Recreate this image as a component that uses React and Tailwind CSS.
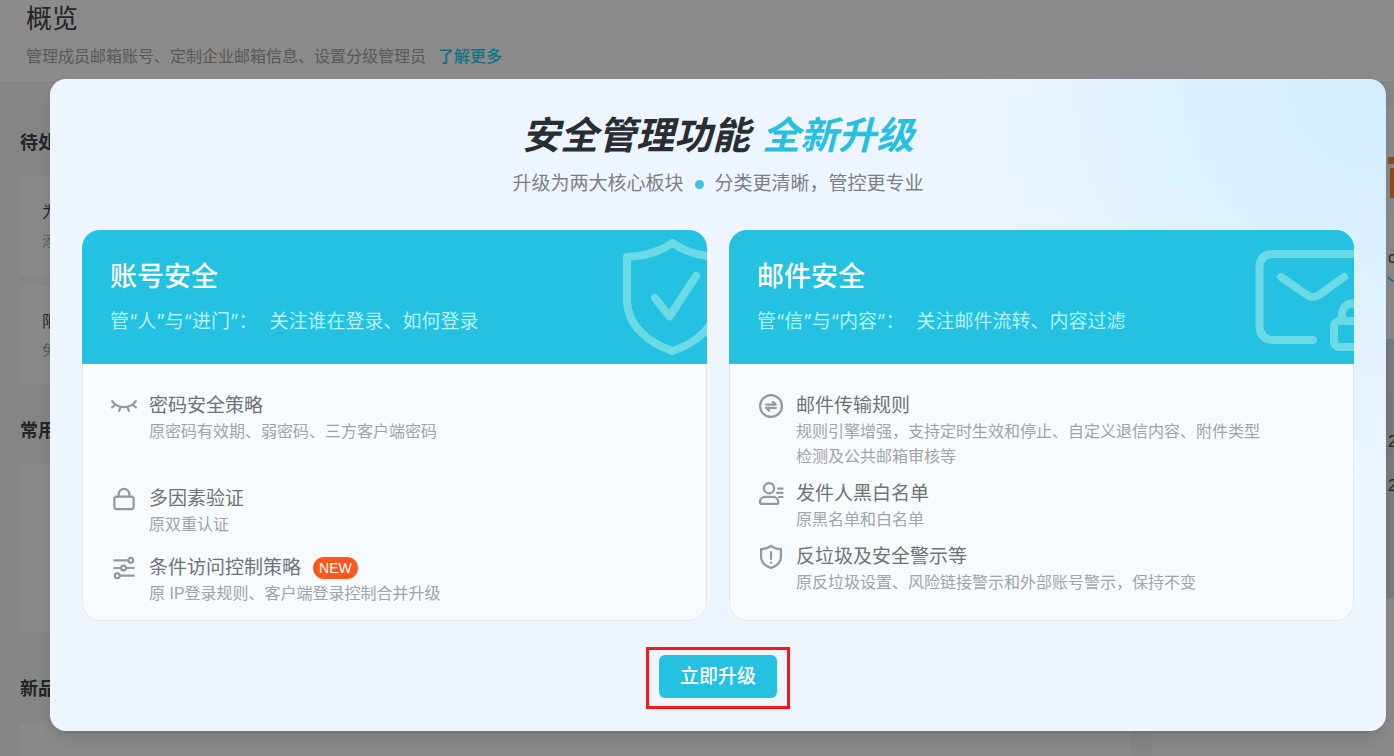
import React from "react";

const accountItems = [
  {
    icon: "eye",
    title: "密码安全策略",
    desc: "原密码有效期、弱密码、三方客户端密码",
    spacing: "mb-[42px]",
  },
  { icon: "lock", title: "多因素验证", desc: "原双重认证", spacing: "mb-[18px]" },
  {
    icon: "sliders",
    title: "条件访问控制策略",
    desc: "原 IP登录规则、客户端登录控制合并升级",
    isNew: true,
    spacing: "",
  },
];

const mailItems = [
  {
    icon: "transfer",
    title: "邮件传输规则",
    desc: "规则引擎增强，支持定时生效和停止、自定义退信内容、附件类型检测及公共邮箱审核等",
    spacing: "mb-3",
  },
  { icon: "user", title: "发件人黑白名单", desc: "原黑名单和白名单", spacing: "mb-3" },
  {
    icon: "shield",
    title: "反垃圾及安全警示等",
    desc: "原反垃圾设置、风险链接警示和外部账号警示，保持不变",
    spacing: "",
  },
];

const iconPaths = {
  eye: (
    <path d="M1.200 8.500c6 8.300 18.400 8.300 24.600 0M4.500 12l-3.300 3M10 14.600l-1.600 4M17 14.600l1.600 4M22.500 12l3.300 3" />
  ),
  lock: (
    <>
      <rect x="3.500" y="11" width="20" height="13" rx="2.500" />
      <path d="M8 11V8.500a5.500 5.500 0 0 1 11 0v2.500" />
    </>
  ),
  sliders: (
    <>
      <path d="M3.500 5.500h14M3.500 13.500h7M15.500 13.500H23.500M9.500 21.500h14" />
      <circle cx="20.500" cy="5.500" r="2.500" />
      <circle cx="13" cy="13.500" r="2.500" />
      <circle cx="6.500" cy="21.500" r="2.500" />
    </>
  ),
  transfer: (
    <>
      <circle cx="13.500" cy="13.500" r="11.300" />
      <path d="M8.500 12h10l-3.200-2.800M18.500 15.500h-10l3.200 2.800" />
    </>
  ),
  user: (
    <>
      <circle cx="11.500" cy="7.500" r="5.300" />
      <path d="M2 22c0-3.500 2.500-5.500 5.500-5.500h8c3 0 5.500 2 5.500 5.500 0 1-.6 1.800-1.500 1.800h-16C2.600 23.800 2 23 2 22z" />
      <path d="M21 8h4.500M19.500 12.300h6M22 16.600h3.500" />
    </>
  ),
  shield: (
    <>
      <path d="M13.500 2c2.500 2 6 3.300 10.300 3.300V13c0 5.700-4.200 9.900-10.300 12C7.400 22.900 3.200 18.700 3.200 13V5.300C7.500 5.300 11 4 13.500 2z" />
      <path d="M13.500 8.500v7M13.500 19.200v.4" />
    </>
  ),
};

function ItemIcon({ name }) {
  return (
    <svg
      viewBox="0 0 27 27"
      className="w-[26px] h-[26px] shrink-0"
      fill="none"
      stroke="#95989c"
      strokeWidth="2.300"
      strokeLinecap="round"
      strokeLinejoin="round"
      aria-hidden="true"
    >
      {iconPaths[name]}
    </svg>
  );
}

function ShieldMark() {
  return (
    <svg
      viewBox="0 0 120 134"
      className="absolute right-0 top-0 w-[120px] h-[134px]"
      fill="none"
      stroke="#6bdae7"
      strokeWidth="8"
      strokeLinecap="round"
      strokeLinejoin="round"
      aria-hidden="true"
    >
      <path d="M85.500 13Q67 26 40 27V70C40 96 62 113 85.500 121C109 113 131 96 131 70V27Q104 26 85.500 13z" />
      <path d="M68 68L82.500 86.500L109 46" />
    </svg>
  );
}

function MailMark() {
  return (
    <svg
      viewBox="0 0 120 134"
      className="absolute right-0 top-0 w-[120px] h-[134px]"
      fill="none"
      stroke="#6bdae7"
      strokeWidth="8"
      strokeLinecap="round"
      strokeLinejoin="round"
      aria-hidden="true"
    >
      <path d="M134 24H40Q25.500 24 25.500 38V95Q25.500 110 40 110H79" />
      <path d="M47 47L73 65Q79 69 85 65L110 47" />
      <rect x="100" y="91" width="37" height="26" rx="5" />
      <path d="M108 91V84a10.500 10.500 0 0 1 21 0V91" />
    </svg>
  );
}

function FeatureCard({ title, topic, focus, mark, items }) {
  return (
    <section className="flex flex-col rounded-[18px] overflow-hidden bg-[#fafcfd]/80">
      <div className="relative overflow-hidden bg-[#24c1e0] px-7 pt-[29px] pb-7">
        {mark}
        <h2 className="text-[27px] leading-9 font-medium text-white">{title}</h2>
        <p className="mt-[13px] flex gap-3 text-[19px] leading-7 text-[#b5f1f8] whitespace-nowrap">
          <span className="font-[Inter,'Noto_Sans_CJK_SC',sans-serif]">{topic}</span>
          <span>{focus}</span>
        </p>
      </div>
      <ul className="flex-1 px-7 pt-[29px] pb-[14px] rounded-b-[18px] border border-t-0 border-[#e1e7ec]">
        {items.map((item) => (
          <li key={item.title} className={`flex gap-3 ${item.spacing}`}>
            <ItemIcon name={item.icon} />
            <div>
              <h3 className="flex items-center gap-3 text-[19px] leading-[26px] text-[#6f7276]">
                {item.title}
                {item.isNew && (
                  <span className="rounded-full bg-[#ff5722] px-[6px] text-sm leading-[22px] text-white">
                    NEW
                  </span>
                )}
              </h3>
              <p className="max-w-[476px] text-base leading-[25px] text-[#a1a4a8]">
                {item.desc}
              </p>
            </div>
          </li>
        ))}
      </ul>
    </section>
  );
}

// Admin overview page that sits under the dialog
function OverviewPage() {
  return (
    <div className="flex flex-col h-full bg-[#f1f5f4] text-[#404447]">
      <header className="bg-[#fdfdfd] pl-[26px] pt-px pb-[13px] border-b border-[#e2e4e6]">
        <h1 className="text-[26px] leading-9">概览</h1>
        <p className="mt-2 text-base leading-6 text-[#a2a2a2]">
          管理成员邮箱账号、定制企业邮箱信息、设置分级管理员
          <a href="#more" className="ml-3 font-medium text-[#1ed2ee]">
            了解更多
          </a>
        </p>
      </header>
      <div className="flex flex-1 min-h-0 gap-[21px] pl-5">
        <main className="flex-1 pt-[46px]">
          <h2 className="text-lg leading-7 font-bold">待处</h2>
          <div className="mt-5 h-[98px] bg-[#fafafa] px-[22px] pt-6">
            <p className="text-base leading-6">为</p>
            <p className="mt-[6px] text-sm leading-5 text-[#a2a2a2]">添</p>
          </div>
          <div className="mt-[11px] h-[98px] bg-[#fafafa] px-[22px] pt-6">
            <p className="text-base leading-6">限</p>
            <p className="mt-[6px] text-sm leading-5 text-[#a2a2a2]">免</p>
          </div>
          <h2 className="mt-[33px] text-lg leading-7 font-bold">常用</h2>
          <div className="mt-5 h-[167px] bg-[#fafafa]"></div>
          <h2 className="mt-[43px] text-lg leading-7 font-bold">新品</h2>
          <div className="mt-5 h-[167px] bg-[#fafafa]"></div>
        </main>
        <aside className="w-[242px] mt-6 bg-[#fafafa] overflow-hidden">
          <div className="h-[232px] pl-[236px] pt-[50px]">
            <div className="h-[7px] bg-[#ff8a35]"></div>
            <div className="mt-1 ml-[2px] h-[30px] bg-[#ff8a35]"></div>
            <p className="mt-[50px] text-base leading-5">c</p>
            <svg viewBox="0 0 8 8" className="w-2 h-2 mt-2" fill="none" stroke="#1ed2ee" strokeWidth="1.500">
              <path d="M0 1Q3 5 8 6" />
            </svg>
          </div>
          <div className="h-[259px] bg-[#dbe1e6] pl-[236px] pt-[91px] text-base leading-6">
            <p>2</p>
            <p className="mt-5">2</p>
          </div>
        </aside>
      </div>
    </div>
  );
}

export default function App() {
  return (
    <div
      lang="zh-CN"
      className="relative h-screen overflow-hidden font-['Liberation_Sans','Noto_Sans_CJK_SC',sans-serif]"
    >
      <OverviewPage />
      <div className="absolute inset-0 overflow-auto bg-black/45 pt-[79px] pl-[50px] pr-2">
        <div
          role="dialog"
          aria-modal="true"
          aria-labelledby="upgrade-title"
          className="flex flex-col rounded-2xl px-8 pt-[33px] pb-[22px] shadow-lg bg-[#eff5fe] bg-[radial-gradient(440px_420px_at_top_right,#d0edfe_0%,#daf0fe_40%,#eff5fe_100%)]"
        >
          <h1
            id="upgrade-title"
            className="flex justify-center gap-3 text-[38px] leading-[48px] font-bold italic text-[#292e33]"
          >
            <span>安全管理功能</span>
            <span className="text-[#27c0de]">全新升级</span>
          </h1>
          <p className="mt-[10px] flex justify-center items-center gap-[11px] text-[19px] leading-7 text-[#7c8085]">
            <span>升级为两大核心板块</span>
            <span className="w-[9px] h-[9px] rounded-full bg-[#3cc6de]"></span>
            <span>分类更清晰，管控更专业</span>
          </p>
          <div className="mt-8 grid grid-cols-2 gap-[22px]">
            <FeatureCard
              title="账号安全"
              topic="管“人”与“进门”："
              focus="关注谁在登录、如何登录"
              mark={<ShieldMark />}
              items={accountItems}
            />
            <FeatureCard
              title="邮件安全"
              topic="管“信”与“内容”："
              focus="关注邮件流转、内容过滤"
              mark={<MailMark />}
              items={mailItems}
            />
          </div>
          <div className="mt-[26px] self-center border-[3px] border-[#fb1418] px-[10px] pt-[5px] pb-2">
            <button
              type="button"
              className="block rounded-md bg-[#24c1e0] px-[21px] py-2 text-[19px] leading-[27px] font-medium text-white"
            >
              立即升级
            </button>
          </div>
        </div>
      </div>
    </div>
  );
}
